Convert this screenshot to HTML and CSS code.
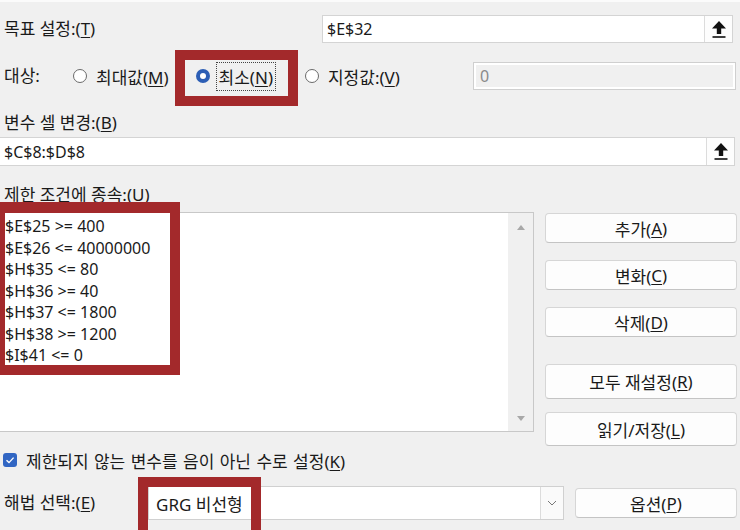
FILE: index.html
```html
<!DOCTYPE html>
<html lang="ko">
<head>
<meta charset="utf-8">
<title>해 찾기 매개 변수</title>
<link rel="stylesheet" href="styles.css">
</head>
<body>
<div class="dialog">
  <div class="row row-target">
    <span class="label target-label">목표 설정:(<u>T</u>)</span>
    <div class="field field-target">
      <span class="field-text">$E$32</span>
      <span class="ref-btn"><svg width="16" height="19" viewBox="0 0 16 19"><path d="M8 1 L15 8.5 L10.2 8.5 L10.2 14 L5.8 14 L5.8 8.5 L1 8.5 Z" fill="#111"/><rect x="1.5" y="16.2" width="13" height="1.6" fill="#111"/></svg></span>
    </div>
  </div>

  <div class="row row-by">
    <span class="label by-label">대상:</span>
    <span class="radio-item item-max"><span class="radio"></span><span class="radio-text">최대값(<u>M</u>)</span></span>
    <span class="radio-item item-min"><span class="radio checked"></span><span class="radio-text focus">최소(<u>N</u>)</span></span>
    <span class="radio-item item-val"><span class="radio"></span><span class="radio-text">지정값:(<u>V</u>)</span></span>
    <div class="field field-value"><span class="value-inner">0</span></div>
  </div>

  <div class="label block-label label-changing">변수 셀 변경:(<u>B</u>)</div>
  <div class="field field-changing">
    <span class="field-text">$C$8:$D$8</span>
    <span class="ref-btn"><svg width="16" height="19" viewBox="0 0 16 19"><path d="M8 1 L15 8.5 L10.2 8.5 L10.2 14 L5.8 14 L5.8 8.5 L1 8.5 Z" fill="#111"/><rect x="1.5" y="16.2" width="13" height="1.6" fill="#111"/></svg></span>
  </div>

  <div class="label block-label label-subject">제한 조건에 종속:(<u>U</u>)</div>

  <div class="main">
    <div class="listbox">
      <ul class="constraints">
        <li>$E$25 &gt;= 400</li>
        <li>$E$26 &lt;= 40000000</li>
        <li>$H$35 &lt;= 80</li>
        <li>$H$36 &gt;= 40</li>
        <li>$H$37 &lt;= 1800</li>
        <li>$H$38 &gt;= 1200</li>
        <li>$I$41 &lt;= 0</li>
      </ul>
      <div class="scrollbar">
        <span class="arrow up"></span>
        <span class="arrow down"></span>
      </div>
    </div>
    <div class="buttons">
      <button class="btn b1">추가(<u>A</u>)</button>
      <button class="btn b2">변화(<u>C</u>)</button>
      <button class="btn b3">삭제(<u>D</u>)</button>
      <button class="btn b4">모두 재설정(<u>R</u>)</button>
      <button class="btn b5">읽기/저장(<u>L</u>)</button>
    </div>
  </div>

  <div class="row row-check">
    <span class="checkbox"><svg width="10" height="10" viewBox="0 0 10 10"><path d="M1.5 5.2 L4 7.6 L8.6 2.6" fill="none" stroke="#fff" stroke-width="1.4"/></svg></span>
    <span class="check-text">제한되지 않는 변수를 음이 아닌 수로 설정(<u>K</u>)</span>
  </div>

  <div class="row row-method">
    <span class="label method-label">해법 선택:(<u>E</u>)</span>
    <div class="combo">
      <span class="combo-text">GRG 비선형</span>
      <span class="combo-btn"><svg width="10" height="6" viewBox="0 0 10 6"><path d="M1 1 L5 5 L9 1" fill="none" stroke="#777" stroke-width="1"/></svg></span>
    </div>
    <button class="btn btn-options">옵션(<u>P</u>)</button>
  </div>

  <div class="mark mark-min"></div>
  <div class="mark mark-list"></div>
  <div class="mark mark-method"></div>
</div>
</body>
</html>
```

FILE: styles.css
```css
* { box-sizing: border-box; }
html, body { margin: 0; padding: 0; }
body {
  background: #f0f0f0;
  font-family: "Noto Sans", "Noto Sans CJK KR", sans-serif;
  font-size: 16px;
  color: #1a1a1a;
  width: 740px;
  height: 530px;
  overflow: hidden;
}
.dialog {
  position: relative;
  width: 740px;
  height: 530px;
  border-top: 2px solid #fbfbfb;
}
u { text-decoration: underline; text-underline-offset: 2px; }
.row { display: flex; align-items: center; }
.label { padding-left: 4px; white-space: nowrap; line-height: 20px; font-size: 17px; }

.field {
  background: #fff;
  border: 1px solid #d4d4d4;
  display: flex;
  align-items: center;
}
.field-text { flex: 1; padding-left: 4px; }
.ref-btn {
  width: 28px;
  align-self: stretch;
  border-left: 1px solid #dcdcdc;
  display: flex;
  align-items: center;
  justify-content: center;
  background: #fdfdfd;
}

.row-target { margin-top: 13px; height: 28px; }
.target-label { width: 322px; }
.field-target { width: 411px; height: 28px; }

.row-by { margin-top: 19px; height: 28px; }
.by-label { width: 73px; }
.radio-item { display: inline-flex; align-items: center; gap: 9px; white-space: nowrap; font-size: 17px; }
.radio {
  width: 14px; height: 14px; border-radius: 50%;
  border: 1px solid #6a6a6a; background: #fff;
  display: inline-block; position: relative; flex: none;
}
.radio.checked { border: none; background: #2c5eb5; }
.radio.checked::after {
  content: ""; position: absolute; left: 4px; top: 4px;
  width: 6px; height: 6px; border-radius: 50%; background: #fff;
}
.item-min { margin-left: 27px; gap: 8px; }
.item-val { margin-left: 31px; }
.radio-text.focus { outline: 1px dotted #444; outline-offset: 1px; padding: 0 1px; }
.field-value { margin-left: auto; margin-right: 4px; width: 263px; height: 28px; padding: 2px; border-color: #cfcfcf; }
.value-inner {
  display: flex; align-items: center; width: 100%; height: 100%;
  background: #f0f0f0; color: #8a8a8a; padding-left: 4px;
}

.block-label { height: 20px; }
.label-changing { margin-top: 23px; }
.field-changing { margin-top: 4px; width: 735px; height: 29px; border-left: none; }
.label-subject { margin-top: 19px; }

.main { display: flex; margin-top: 7px; height: 235px; }
.listbox {
  width: 534px; height: 220px;
  background: #fff;
  border: 1px solid #c8c8c8; border-left: none;
  display: flex;
}
.constraints {
  list-style: none; margin: 0; padding: 3px 0 0 5px; flex: 1;
}
.constraints li { line-height: 21.5px; height: 21.5px; white-space: nowrap; }
.scrollbar {
  width: 25px; background: #f0f0f0;
  display: flex; flex-direction: column; justify-content: space-between; align-items: center;
  padding: 12px 0 10px;
}
.arrow { width: 0; height: 0; border-left: 4px solid transparent; border-right: 4px solid transparent; }
.arrow.up { border-bottom: 5px solid #a8a8a8; }
.arrow.down { border-top: 5px solid #a8a8a8; }

.buttons { margin-left: 11px; width: 192px; display: flex; flex-direction: column; padding-top: 1px; }
.btn {
  font-family: inherit; font-size: 17px; color: #1a1a1a;
  background: #fdfdfd;
  border: 1px solid #d6d6d6; border-bottom-color: #c4c4c4;
  border-radius: 4px;
  padding: 0;
  display: flex; align-items: center; justify-content: center;
}
.b1, .b2, .b3 { height: 30px; }
.b2, .b3 { margin-top: 17px; }
.b4 { margin-top: 27px; height: 35px; }
.b5 { margin-top: 13px; height: 34px; }

.row-check { margin-top: 3px; height: 20px; padding-left: 3px; }
.checkbox {
  width: 14px; height: 14px; border-radius: 3px; background: #3166c3;
  display: inline-flex; align-items: center; justify-content: center; flex: none;
}
.check-text { margin-left: 9px; white-space: nowrap; font-size: 17px; word-spacing: 1px; }

.row-method { margin-top: 16px; height: 34px; }
.method-label { width: 148px; }
.combo {
  width: 416px; height: 34px; background: #fff;
  border: 1px solid #d0d0d0; display: flex; align-items: center;
}
.combo-text { flex: 1; padding-left: 7px; font-size: 17px; }
.combo-btn {
  width: 23px; align-self: stretch; border-left: 1px solid #dcdcdc;
  display: flex; align-items: center; justify-content: center; background: #fafafa;
}
.btn-options { margin-left: 11px; width: 162px; height: 30px; }

.mark { position: absolute; border: 10px solid #a3292b; }
.mark-min { left: 175px; top: 48px; width: 123px; height: 56px; }
.mark-list { left: -5px; top: 200px; width: 185px; height: 173px; border-top-width: 11px; }
.mark-method { left: 138px; top: 475px; width: 123px; height: 70px; }
```
